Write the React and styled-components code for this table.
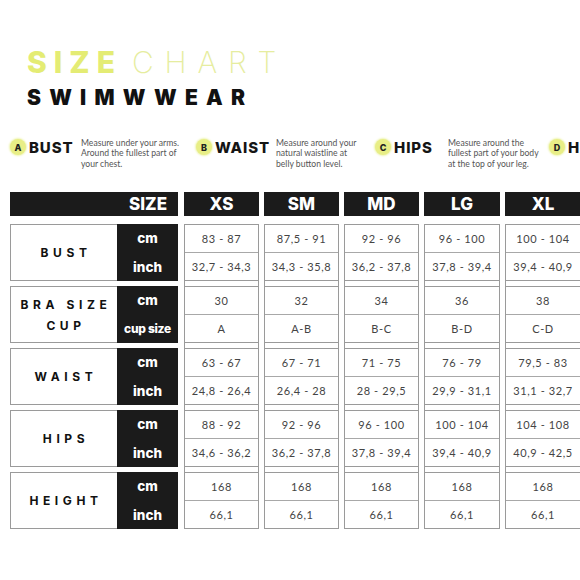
import React from "react";
import styled, { createGlobalStyle } from "styled-components";

const Global = createGlobalStyle`
  html, body { margin: 0; padding: 0; background: #fff; overflow: hidden; }
  body { font-family: "Lato", "Open Sans", sans-serif; width: 580px; height: 580px; }
`;

const Page = styled.div`
  width: 700px;
  padding: 47px 0 0 10px;
  box-sizing: border-box;
`;

const Title = styled.h1`
  margin: 0 0 0 17px;
  font-family: "Inter", sans-serif;
  font-size: 30px;
  line-height: 30px;
  letter-spacing: 7px;
  color: #e4ec74;
  font-weight: 800;
  white-space: nowrap;
`;

const Thin = styled.span`
  font-weight: 200;
  color: #e6eda0;
  letter-spacing: 10.8px;
  margin-left: 10px;
`;

const Subtitle = styled.h2`
  margin: 10px 0 0 17px;
  font-family: "Inter", sans-serif;
  font-size: 21px;
  line-height: 21px;
  letter-spacing: 8.2px;
  font-weight: 900;
  color: #111;
`;

const Legend = styled.div`
  display: flex;
  margin-top: 21px;
  height: 36px;
  align-items: center;
`;

const LegendItem = styled.div`
  display: flex;
  align-items: center;
  width: ${(p) => p.$w}px;
  flex: none;
`;

const Badge = styled.span`
  width: 16px;
  height: 16px;
  border-radius: 50%;
  background: #e8ee86;
  box-shadow: 0 0 2px 1px #eef4b0;
  display: flex;
  align-items: center;
  justify-content: center;
  font-family: "Inter", sans-serif;
  font-size: 9px;
  font-weight: 800;
  color: #222;
  flex: none;
`;

const LegendTitle = styled.span`
  font-family: "Inter", sans-serif;
  font-size: 15px;
  font-weight: 800;
  letter-spacing: 0.9px;
  color: #151515;
  margin-left: 3px;
  width: ${(p) => p.$w}px;
  flex: none;
`;

const LegendText = styled.p`
  margin: 13px 0 0 2px;
  font-size: 8.6px;
  line-height: 10.5px;
  color: #555;
  white-space: nowrap;
`;

const Table = styled.div`
  display: flex;
  gap: 5px;
  margin-top: 27px;
`;

const LeftCol = styled.div`
  width: 168px;
  margin-right: 1px;
  display: flex;
  flex-direction: column;
  flex: none;
`;

const HeadCell = styled.div`
  height: 24px;
  background: #1b1b1b;
  color: #fff;
  font-family: "Inter", sans-serif;
  font-weight: 800;
  font-size: 17px;
  display: flex;
  align-items: center;
  justify-content: ${(p) => (p.$right ? "flex-end" : "center")};
  padding-right: ${(p) => (p.$right ? "11px" : "0")};
  margin-bottom: 8px;
`;

const Blocks = styled.div`
  display: flex;
  flex-direction: column;
  gap: 5px;
`;

const LabelBlock = styled.div`
  display: flex;
  height: 57px;
`;

const LabelBox = styled.div`
  width: 107px;
  box-sizing: border-box;
  border: 1px solid #9a9a9a;
  border-right: none;
  display: flex;
  align-items: center;
  justify-content: center;
  text-align: center;
  font-family: "Inter", sans-serif;
  font-size: 12px;
  line-height: 21px;
  font-weight: 700;
  letter-spacing: 4.6px;
  padding-left: 4px;
  color: #111;
`;

const UnitBox = styled.div`
  width: 61px;
  background: #1b1b1b;
  display: flex;
  flex-direction: column;
`;

const Unit = styled.div`
  flex: 1;
  display: flex;
  align-items: center;
  justify-content: center;
  color: #fff;
  font-family: "Inter", sans-serif;
  font-weight: 800;
  font-size: ${(p) => (p.$small ? "12px" : "13.5px")};
  letter-spacing: ${(p) => (p.$small ? "-0.3px" : "0")};
`;

const DataCol = styled.div`
  width: ${(p) => p.$w}px;
  flex: none;
  display: flex;
  flex-direction: column;
`;

const DataBody = styled.div`
  display: flex;
  flex-direction: column;
  gap: 5px;
  border-left: 1px solid #9a9a9a;
  border-right: 1px solid #9a9a9a;
`;

const DataBlock = styled.div`
  height: 57px;
  box-sizing: border-box;
  border-top: 1px solid #9a9a9a;
  border-bottom: 1px solid #9a9a9a;
  display: flex;
  flex-direction: column;
`;

const DataCell = styled.div`
  flex: 1;
  display: flex;
  align-items: center;
  justify-content: center;
  font-size: 11px;
  letter-spacing: 0.6px;
  color: #444;
  & + & { border-top: 1px solid #a8a8a8; }
`;

const legend = [
  { l: "A", t: "BUST", tw: 50, w: 186, d: ["Measure under your arms.", "Around the fullest part of", "your chest."] },
  { l: "B", t: "WAIST", tw: 59, w: 179, d: ["Measure around your", "natural waistline at", "belly button level."] },
  { l: "C", t: "HIPS", tw: 52, w: 174, d: ["Measure around the", "fullest part of your body", "at the top of your leg."] },
  { l: "D", t: "HEIGHT", tw: 80, w: 200, d: ["Measure from the top", "of your head to your", "feet."] },
];

const rows = [
  { label: ["BUST"], units: ["cm", "inch"] },
  { label: ["BRA SIZE", "CUP"], units: ["cm", "cup size"] },
  { label: ["WAIST"], units: ["cm", "inch"] },
  { label: ["HIPS"], units: ["cm", "inch"] },
  { label: ["HEIGHT"], units: ["cm", "inch"] },
];

const sizes = [
  { s: "XS", w: 75, v: [["83 - 87", "32,7 - 34,3"], ["30", "A"], ["63 - 67", "24,8 - 26,4"], ["88 - 92", "34,6 - 36,2"], ["168", "66,1"]] },
  { s: "SM", w: 75, v: [["87,5 - 91", "34,3 - 35,8"], ["32", "A-B"], ["67 - 71", "26,4 - 28"], ["92 - 96", "36,2 - 37,8"], ["168", "66,1"]] },
  { s: "MD", w: 75, v: [["92 - 96", "36,2 - 37,8"], ["34", "B-C"], ["71 - 75", "28 - 29,5"], ["96 - 100", "37,8 - 39,4"], ["168", "66,1"]] },
  { s: "LG", w: 76, v: [["96 - 100", "37,8 - 39,4"], ["36", "B-D"], ["76 - 79", "29,9 - 31,1"], ["100 - 104", "39,4 - 40,9"], ["168", "66,1"]] },
  { s: "XL", w: 76, v: [["100 - 104", "39,4 - 40,9"], ["38", "C-D"], ["79,5 - 83", "31,1 - 32,7"], ["104 - 108", "40,9 - 42,5"], ["168", "66,1"]] },
  { s: "XXL", w: 76, v: [["105 - 109", "41,3 - 42,9"], ["40", "D"], ["84 - 88", "33,1 - 34,6"], ["109 - 113", "42,9 - 44,5"], ["168", "66,1"]] },
];

export default function App() {
  return (
    <>
      <Global />
      <Page>
        <Title>
          SIZE<Thin>CHART</Thin>
        </Title>
        <Subtitle>SWIMWWEAR</Subtitle>
        <Legend>
          {legend.map((it) => (
            <LegendItem key={it.l} $w={it.w}>
              <Badge>{it.l}</Badge>
              <LegendTitle $w={it.tw}>{it.t}</LegendTitle>
              <LegendText>
                {it.d.map((line, i) => (
                  <React.Fragment key={i}>
                    {line}
                    {i < it.d.length - 1 && <br />}
                  </React.Fragment>
                ))}
              </LegendText>
            </LegendItem>
          ))}
        </Legend>
        <Table>
          <LeftCol>
            <HeadCell $right>SIZE</HeadCell>
            <Blocks>
              {rows.map((r, i) => (
                <LabelBlock key={i}>
                  <LabelBox>
                    <div>
                      {r.label.map((t, j) => (
                        <div key={j}>{t}</div>
                      ))}
                    </div>
                  </LabelBox>
                  <UnitBox>
                    {r.units.map((u) => (
                      <Unit key={u} $small={u === "cup size"}>{u}</Unit>
                    ))}
                  </UnitBox>
                </LabelBlock>
              ))}
            </Blocks>
          </LeftCol>
          {sizes.map((c) => (
            <DataCol key={c.s} $w={c.w}>
              <HeadCell>{c.s}</HeadCell>
              <DataBody>
                {c.v.map((pair, i) => (
                  <DataBlock key={i}>
                    <DataCell>{pair[0]}</DataCell>
                    <DataCell>{pair[1]}</DataCell>
                  </DataBlock>
                ))}
              </DataBody>
            </DataCol>
          ))}
        </Table>
      </Page>
    </>
  );
}
